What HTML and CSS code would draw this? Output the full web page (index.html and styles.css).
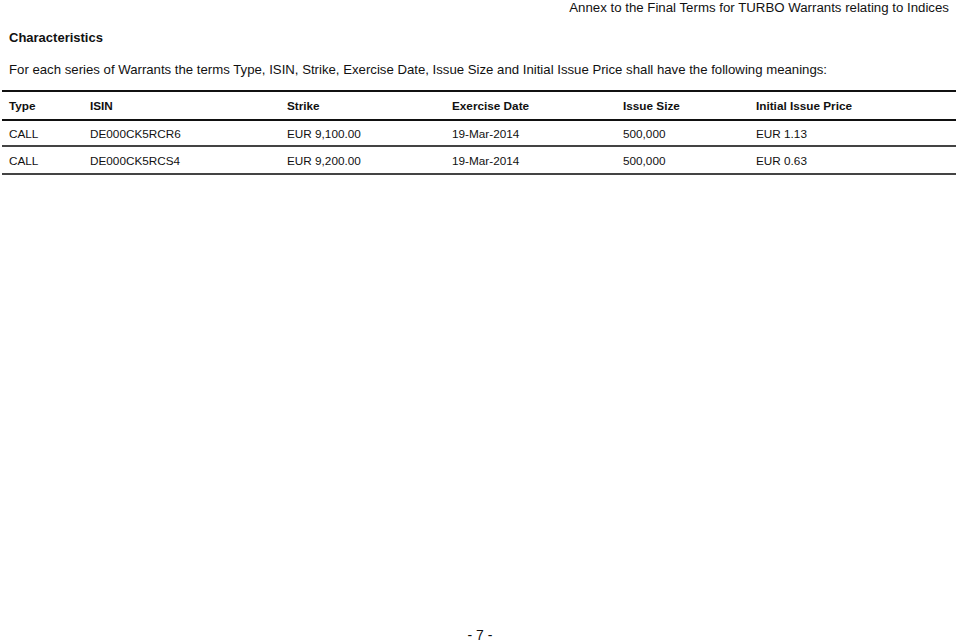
FILE: index.html
```html
<!DOCTYPE html>
<html>
<head>
<meta charset="utf-8">
<link rel="stylesheet" href="styles.css">
</head>
<body>
<div class="page">
  <div class="running-head">Annex to the Final Terms for TURBO Warrants relating to Indices</div>
  <h1 class="title">Characteristics</h1>
  <p class="intro">For each series of Warrants the terms Type, ISIN, Strike, Exercise Date, Issue Size and Initial Issue Price shall have the following meanings:</p>
  <div class="table">
    <div class="row head">
      <div>Type</div><div>ISIN</div><div>Strike</div><div>Exercise Date</div><div>Issue Size</div><div>Initial Issue Price</div>
    </div>
    <div class="row r1">
      <div>CALL</div><div>DE000CK5RCR6</div><div>EUR 9,100.00</div><div>19-Mar-2014</div><div>500,000</div><div>EUR 1.13</div>
    </div>
    <div class="row r2">
      <div>CALL</div><div>DE000CK5RCS4</div><div>EUR 9,200.00</div><div>19-Mar-2014</div><div>500,000</div><div>EUR 0.63</div>
    </div>
  </div>
  <div class="spacer"></div>
  <div class="page-no">- 7 -</div>
</div>
</body>
</html>
```
FILE: styles.css
```css
html, body {
  margin: 0;
  padding: 0;
  background: #fff;
}
body {
  font-family: "Liberation Sans", Arial, sans-serif;
  font-size: 13.25px;
  line-height: 15px;
  color: #111;
}
.page {
  width: 959px;
  height: 643px;
  display: flex;
  flex-direction: column;
  overflow: hidden;
}
.running-head {
  text-align: right;
  padding-right: 10px;
  height: 15px;
}
.title {
  margin: 15px 0 0 9px;
  font-size: 13px;
  line-height: 15px;
  font-weight: bold;
}
.intro {
  margin: 17px 0 0 9px;
  font-size: 13.2px;
}
.table {
  margin: 13px 3px 0 2px;
  border-top: 2px solid #111;
  font-size: 11.75px;
}
.row {
  display: grid;
  grid-template-columns: 81px 197px 165px 171px 133px 1fr;
  align-items: center;
  border-bottom: 2px solid #444;
}
.row > div {
  padding-left: 7px;
}
.head {
  height: 27px;
  font-weight: bold;
  border-bottom-color: #111;
}
.r1 {
  height: 24px;
}
.r2 {
  height: 26px;
}
.spacer {
  flex: 1;
}
.page-no {
  text-align: center;
  padding-left: 1px;
  font-size: 14px;
  height: 15px;
  line-height: 15px;
}
```
